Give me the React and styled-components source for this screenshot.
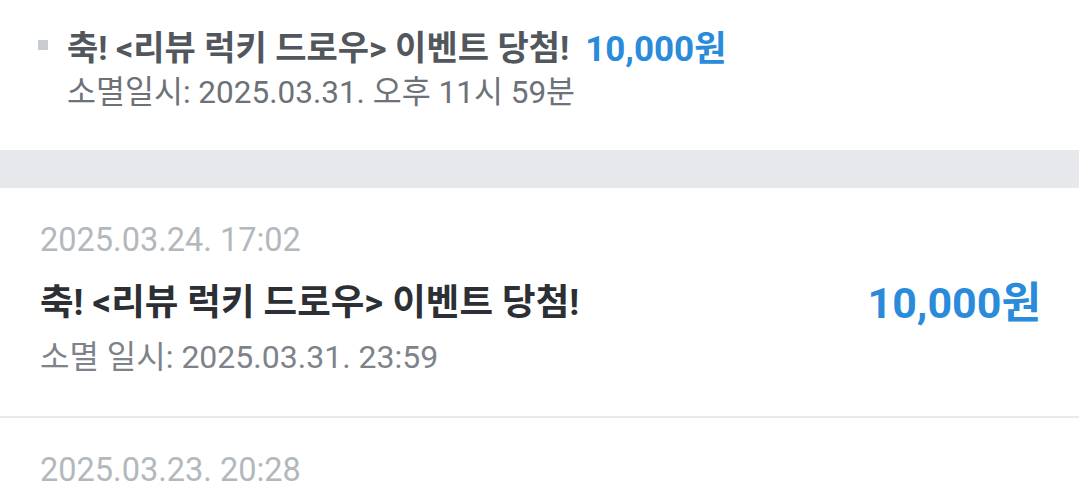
import React from 'react';
import styled, { createGlobalStyle } from 'styled-components';

const GlobalStyle = createGlobalStyle`
  html, body {
    margin: 0;
    padding: 0;
    background: #ffffff;
  }
  body {
    font-family: Roboto, "Noto Sans CJK KR", sans-serif;
    -webkit-font-smoothing: antialiased;
  }
`;

const Page = styled.div`
  width: 1079px;
  height: 489px;
  overflow: hidden;
  background: #ffffff;
`;

const Notice = styled.section`
  height: 150px;
  box-sizing: border-box;
  padding: 23px 0 0 38px;
`;

const NoticeRow = styled.div`
  display: flex;
  align-items: center;
  height: 44px;
`;

const Bullet = styled.span`
  width: 10px;
  height: 10px;
  background: #c9cdd2;
  margin-right: 19px;
  flex-shrink: 0;
`;

const NoticeTitle = styled.span`
  font-size: 34px;
  font-weight: 700;
  color: #51575d;
`;

const Amount = styled.span`
  font-weight: 700;
  color: #2a8bdb;
  font-size: ${(p) => p.$size}px;
  margin-left: ${(p) => p.$gap || 0}px;
`;

const NoticeSub = styled.div`
  margin-left: 29px;
  margin-top: 3px;
  font-size: 31.5px;
  line-height: 46px;
  color: #6c7278;
`;

const Band = styled.div`
  height: 38px;
  background: #e6e8eb;
`;

const Item = styled.div`
  padding: 29px 38px 0 40px;
  height: ${(p) => p.$height}px;
  box-sizing: border-box;
  border-bottom: ${(p) => (p.$divider ? '2px solid #e9eaec' : 'none')};
`;

const DateText = styled.div`
  font-size: 32.5px;
  line-height: 46px;
  color: #b3b8bd;
`;

const TitleRow = styled.div`
  display: flex;
  align-items: center;
  justify-content: space-between;
  margin-top: 12px;
  height: 48px;
`;

const Title = styled.span`
  font-size: 36.5px;
  font-weight: 700;
  color: #2c3034;
`;

const Expire = styled.div`
  margin-top: 11px;
  font-size: 32px;
  line-height: 46px;
  color: #7e8389;
`;

export default function App() {
  return (
    <Page>
      <GlobalStyle />
      <Notice>
        <NoticeRow>
          <Bullet />
          <NoticeTitle>축! &lt;리뷰 럭키 드로우&gt; 이벤트 당첨!</NoticeTitle>
          <Amount $size={35} $gap={16}>10,000원</Amount>
        </NoticeRow>
        <NoticeSub>소멸일시: 2025.03.31. 오후 11시 59분</NoticeSub>
      </Notice>
      <Band />
      <Item $height={230} $divider>
        <DateText>2025.03.24. 17:02</DateText>
        <TitleRow>
          <Title>축! &lt;리뷰 럭키 드로우&gt; 이벤트 당첨!</Title>
          <Amount $size={43}>10,000원</Amount>
        </TitleRow>
        <Expire>소멸 일시: 2025.03.31. 23:59</Expire>
      </Item>
      <Item $height={100}>
        <DateText>2025.03.23. 20:28</DateText>
      </Item>
    </Page>
  );
}
